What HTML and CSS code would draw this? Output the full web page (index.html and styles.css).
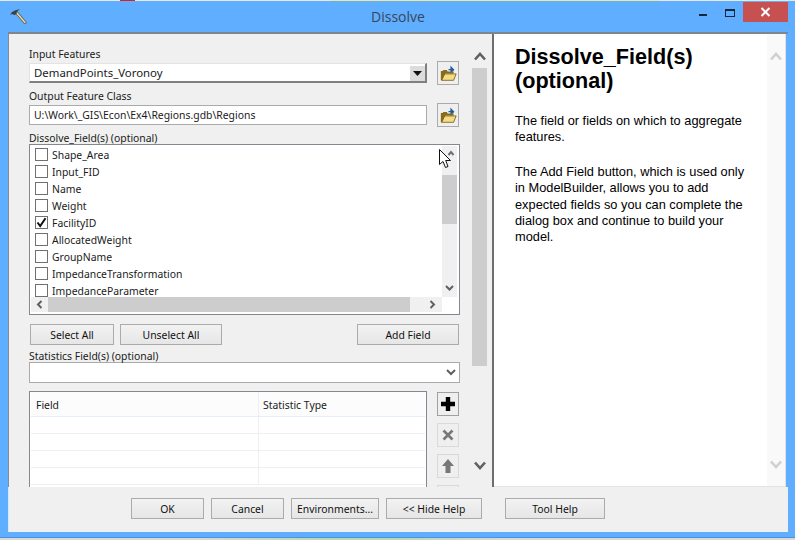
FILE: index.html
```html
<!DOCTYPE html>
<html lang="en">
<head>
<meta charset="utf-8">
<title>Dissolve</title>
<link rel="stylesheet" href="styles.css">
</head>
<body>
<div class="strip strip-top"></div>
<div class="window">
  <header class="titlebar">
    <svg class="hammer" width="18" height="18" viewBox="0 0 18 18"><path d="M7 5 L16 15.5" stroke="#6b6251" stroke-width="3.2" stroke-linecap="round"/><path d="M7 5 L16 15.5" stroke="#e6d9be" stroke-width="1.4" stroke-linecap="round"/><path d="M1 8 L3 5 L6 3.5 L11 2 L8 4.5 L7.5 7 L5.5 8 L3 7 Z" fill="#3c3f46"/></svg>
    <span class="title">Dissolve</span>
    <span class="min"></span>
    <span class="max"></span>
    <span class="close"><svg width="11" height="10" viewBox="0 0 11 10"><path d="M1.5 1 L9.5 9 M9.5 1 L1.5 9" stroke="#fff" stroke-width="2"/></svg></span>
  </header>
  <div class="client">
    <div class="panes">
      <section class="left-pane">
        <div class="form">
          <label class="lbl">Input Features</label>
          <div class="row">
            <div class="combo"><span>DemandPoints_Voronoy</span><span class="drop"><svg width="9" height="5" viewBox="0 0 9 5"><path d="M0 0H9L4.5 5Z" fill="#111"/></svg></span></div>
            <button class="tool"><svg class="folder" width="17" height="17" viewBox="0 0 20 20"><path d="M10 5.5 H15 M13 2.5 L16 5.5 L13 8.5 Z" stroke="#1c5fa8" stroke-width="1.5" fill="#1c5fa8"/><path d="M1 18 V7 H3 L4 6 H8 L9 7.5 H16 V10 H6 L3 18Z" fill="#8a6a1c"/><path d="M2 18 L5.5 10.5 H19 L16 18Z" fill="#f4dc84" stroke="#7a5d18"/></svg></button>
          </div>
          <label class="lbl lbl-next">Output Feature Class</label>
          <div class="row">
            <div class="text-input">U:\Work\_GIS\Econ\Ex4\Regions.gdb\Regions</div>
            <button class="tool"><svg class="folder" width="17" height="17" viewBox="0 0 20 20"><path d="M10 5.5 H15 M13 2.5 L16 5.5 L13 8.5 Z" stroke="#1c5fa8" stroke-width="1.5" fill="#1c5fa8"/><path d="M1 18 V7 H3 L4 6 H8 L9 7.5 H16 V10 H6 L3 18Z" fill="#8a6a1c"/><path d="M2 18 L5.5 10.5 H19 L16 18Z" fill="#f4dc84" stroke="#7a5d18"/></svg></button>
          </div>
          <label class="lbl lbl-list">Dissolve_Field(s) (optional)</label>
          <div class="list">
            <div class="rows">
              <div class="item"><span class="box"></span>Shape_Area</div>
              <div class="item"><span class="box"></span>Input_FID</div>
              <div class="item"><span class="box"></span>Name</div>
              <div class="item"><span class="box"></span>Weight</div>
              <div class="item"><span class="box"><svg width="11" height="11" viewBox="0 0 11 11"><path d="M1.5 5.5 L4.2 9 L9.5 1.2" fill="none" stroke="#111" stroke-width="2"/></svg></span>FacilityID</div>
              <div class="item"><span class="box"></span>AllocatedWeight</div>
              <div class="item"><span class="box"></span>GroupName</div>
              <div class="item"><span class="box"></span>ImpedanceTransformation</div>
              <div class="item"><span class="box"></span>ImpedanceParameter</div>
            </div>
            <div class="vscroll">
              <div class="vthumb"></div>
              <svg class="vdown" width="9" height="6" viewBox="0 0 9 6"><path d="M1 1 L4.5 4.5 L8 1" fill="none" stroke="#606060" stroke-width="2"/></svg>
            </div>
            <div class="hscroll">
              <svg width="7" height="9" viewBox="0 0 7 9"><path d="M5.5 1 L2 4.5 L5.5 8" fill="none" stroke="#606060" stroke-width="2"/></svg>
              <div class="hthumb"></div>
              <svg width="7" height="9" viewBox="0 0 7 9"><path d="M1.5 1 L5 4.5 L1.5 8" fill="none" stroke="#606060" stroke-width="2"/></svg>
            </div>
            <svg class="cursor" width="17" height="21" viewBox="0 0 17 21"><path d="M9.5 6 L12 3 L14.500 6" fill="none" stroke="#707070" stroke-width="2"/><path d="M0.500 0.500 V15.500 L4 12.500 L6.500 18.500 L9 17.500 L6.700 11.500 L11.500 11.500 Z" fill="#fff" stroke="#111"/></svg>
          </div>
          <div class="list-buttons">
            <button class="btn btn-select">Select All</button>
            <button class="btn btn-unselect">Unselect All</button>
            <button class="btn btn-add">Add Field</button>
          </div>
          <label class="lbl lbl-stats">Statistics Field(s) (optional)</label>
          <div class="stat-combo"><svg width="10" height="7" viewBox="0 0 10 7"><path d="M1 1 L5 5 L9 1" fill="none" stroke="#606060" stroke-width="2"/></svg></div>
          <div class="stat-row">
            <div class="table">
              <div class="thead"><span class="c1">Field</span><span class="c2">Statistic Type</span></div>
              <div class="tr"><span class="c1"></span><span class="c2"></span></div>
              <div class="tr"><span class="c1"></span><span class="c2"></span></div>
              <div class="tr"><span class="c1"></span><span class="c2"></span></div>
              <div class="tr"><span class="c1"></span><span class="c2"></span></div>
            </div>
            <div class="tools">
              <button class="tool tool-on"><svg width="16" height="16" viewBox="0 0 16 16"><path d="M8 1V15M1 8H15" stroke="#000" stroke-width="4.400"/></svg></button>
              <button class="tool tool-off"><svg width="12" height="12" viewBox="0 0 12 12"><path d="M1.500 1.500L10.500 10.500M10.500 1.500L1.500 10.500" stroke="#777" stroke-width="2.600"/></svg></button>
              <button class="tool tool-off"><svg width="14" height="16" viewBox="0 0 14 16"><path d="M7 1L13 8H9.500V15H4.500V8H1Z" fill="#777"/></svg></button>
              <button class="tool tool-off"></button>
            </div>
          </div>
        </div>
        <div class="outer-scroll">
          <svg class="chev-up" width="12" height="9" viewBox="0 0 12 9"><path d="M1 7.500L6 2L11 7.500" fill="none" stroke="#606060" stroke-width="2.600"/></svg>
          <div class="outer-thumb"></div>
          <svg class="chev-down" width="12" height="9" viewBox="0 0 12 9"><path d="M1 1.500L6 7L11 1.500" fill="none" stroke="#606060" stroke-width="2.600"/></svg>
        </div>
      </section>
      <div class="divider"></div>
      <section class="help-pane">
        <article class="help">
          <h1>Dissolve_Field(s) (optional)</h1>
          <p>The field or fields on which to aggregate features.</p>
          <p>The Add Field button, which is used only in ModelBuilder, allows you to add expected fields so you can complete the dialog box and continue to build your model.</p>
        </article>
        <div class="help-scroll">
          <svg width="12" height="9" viewBox="0 0 12 9"><path d="M1 7.500L6 2L11 7.500" fill="none" stroke="#d0d0d0" stroke-width="2.600"/></svg>
          <svg width="12" height="9" viewBox="0 0 12 9"><path d="M1 1.500L6 7L11 1.500" fill="none" stroke="#d0d0d0" stroke-width="2.600"/></svg>
        </div>
      </section>
    </div>
    <footer class="footer">
      <button class="btn btn-ok">OK</button>
      <button class="btn btn-ok">Cancel</button>
      <button class="btn btn-env">Environments...</button>
      <button class="btn btn-hide">&lt;&lt; Hide Help</button>
      <button class="btn btn-toolhelp">Tool Help</button>
    </footer>
  </div>
</div>
<div class="strip strip-bottom"></div>
</body>
</html>
```

FILE: styles.css
```css
* { box-sizing: border-box; }
html, body { margin: 0; padding: 0; }
body {
  width: 795px;
  height: 540px;
  overflow: hidden;
  background: #fff;
  font-family: "Noto Sans", "Liberation Sans", sans-serif;
  font-size: 10.4px;
  color: #1a1a1a;
}
button { font: inherit; color: inherit; padding: 0; cursor: default; }
.strip { height: 1px; }
.strip-top {
  background: linear-gradient(90deg, #e8e8e8 0 120px, #e0201c 120px 135px, #e8e8e8 135px 330px, #efe89a 330px 660px, #e8e8e8 660px);
}
.strip-bottom {
  height: 2px;
  background: linear-gradient(90deg, #d8d8d8 0 200px, #bcd7b8 320px 400px, #d8d8d8 500px);
}
.window {
  height: 537px;
  background: #60aeff;
  border-bottom: 1px solid #4b93e0;
  display: flex;
  flex-direction: column;
  padding: 0 7px 5px 8px;
}
.titlebar {
  position: relative;
  height: 31px;
  flex: none;
  display: flex;
  justify-content: center;
  align-items: center;
}
.title {
  font-family: "Open Sans", "Noto Sans", sans-serif;
  font-size: 14px;
  color: #37475a;
}
.hammer { position: absolute; left: 1px; top: 6px; }
.min { position: absolute; left: 691px; top: 13px; width: 8px; height: 2px; background: #16263c; }
.max { position: absolute; left: 717px; top: 8px; width: 10px; height: 8px; border: 1px solid #16263c; border-top-width: 2px; }
.close {
  position: absolute; left: 735px; top: 1px; width: 45px; height: 20px;
  background: #c75050; display: flex; align-items: center; justify-content: center;
}
.client { flex: 1; display: flex; flex-direction: column; min-height: 0; }
.panes {
  height: 455px;
  flex: none;
  display: flex;
  overflow: hidden;
  border-top: 2px solid #7f858c;
}
.left-pane {
  width: 482px;
  flex: none;
  background: #f0f0f0;
  border-left: 1px solid #8a8a8a;
  display: flex;
}
.form { width: 463px; flex: none; padding: 13px 0 0 20px; overflow: hidden; }
.lbl { display: block; height: 14px; line-height: 14px; white-space: nowrap; }
.lbl-next { margin-top: 4px; }
.lbl-list { margin-top: 4px; height: 13px; }
.lbl-stats { margin-top: 4px; height: 13px; line-height: 14px; }
.row { display: flex; align-items: center; justify-content: space-between; width: 430px; height: 24px; }
.combo {
  width: 398px; height: 20px; background: #fff;
  border: 1px solid #a6a6a6; border-right-width: 2px; border-bottom-width: 2px;
  border-color: #e3e3e3 #808080 #808080 #e3e3e3;
  padding-left: 4px; line-height: 18px; font-size: 11.4px;
  display: flex; justify-content: space-between;
}
.drop { width: 15px; height: 15px; background: #dcdcdc; display: flex; align-items: center; justify-content: center; margin-top: 2px; }
.text-input {
  width: 398px; height: 20px; background: #fff; border: 1px solid #ababab;
  padding-left: 4px; line-height: 18px; white-space: nowrap;
}
.tool {
  width: 22px; height: 24px; flex: none; background: #efefef; border: 1px solid #ababab;
  display: flex; align-items: center; justify-content: center;
}
.tool-off { border-color: #d9d9d9; }
.tool-on { border-color: #a0a0a0; }
.list {
  position: relative;
  width: 431px; height: 171px;
  background: #fff; border: 1px solid #828790;
  padding: 1px 2px 2px 1px;
  display: grid;
  grid-template-columns: 1fr 15px;
  grid-template-rows: 151px 15px;
}
.rows { overflow: hidden; padding: 0 0 0 4px; }
.item { height: 17px; line-height: 19px; display: flex; align-items: flex-start; gap: 4px; white-space: nowrap; }
.box {
  width: 13px; height: 13px; flex: none; background: #fff; border: 1px solid #707070;
  margin-top: 2px;
  display: flex; align-items: center; justify-content: center;
}
.vscroll {
  background: #f0f0f0; padding-top: 29px;
  display: flex; flex-direction: column; align-items: center; justify-content: space-between; padding-bottom: 6px;
}
.vthumb { width: 15px; height: 49px; background: #cdcdcd; }
.hscroll {
  grid-column: 1;
  background: #f0f0f0; display: flex; align-items: center;
}
.hscroll svg { margin: 0 5px; flex: none; }
.hthumb { width: 362px; height: 15px; background: #cdcdcd; margin-right: 14px; }
.cursor { position: absolute; left: 409px; top: 4px; }
.list-buttons { width: 430px; display: flex; margin-top: 9px; padding-left: 1px; }
.btn {
  height: 21px; flex: none; border: 1px solid #ababab;
  background: linear-gradient(#f2f2f2, #e6e6e6);
  color: #111;
  white-space: nowrap;
}
.btn-select { width: 84px; }
.btn-unselect { width: 102px; margin-left: 6px; }
.btn-add { width: 102px; margin-left: auto; }
.stat-combo {
  width: 431px; height: 21px; background: #fff; border: 1px solid #ababab;
  display: flex; align-items: center; justify-content: flex-end; padding-right: 3px;
}
.stat-row { width: 430px; display: flex; justify-content: space-between; margin-top: 8px; }
.table { width: 398px; height: 110px; background: #fff; border: 1px solid #828790; border-bottom: 0; padding: 0 1px 0 1px; flex: none; }
.thead { height: 25px; background: #fcfcfc; border-bottom: 1px solid #e6eefa; display: flex; line-height: 26px; }
.tr { height: 17px; border-bottom: 1px solid #efefef; display: flex; }
.c1 { width: 228px; flex: none; padding-left: 5px; border-right: 1px solid #efeff2; }
.c2 { flex: 1; padding-left: 4px; }
.tools { margin-top: 1px; display: flex; flex-direction: column; gap: 7px; }
.outer-scroll {
  width: 15px; flex: none; position: relative;
  display: flex; flex-direction: column; align-items: center;
  padding-top: 18px;
}
.chev-up { display: block; }
.outer-thumb { width: 15px; height: 298px; background: #cdcdcd; margin-top: 7px; }
.chev-down { margin-top: 95px; }
.divider {
  width: 4px; flex: none; background: #f0f0f0;
  border-right: 2px solid #6e6e6e;
}
.help-pane {
  width: 292px; flex: none; background: #fff; display: flex;
  border-right: 1px solid #e0e0e0; border-bottom: 1px solid #e3e3e3;
}
.help {
  flex: 1; padding: 11px 0 0 21px;
  font-family: "Liberation Sans", Arial, sans-serif;
  color: #000;
  font-size: 12.8px;
  line-height: 16.3px;
}
.help h1 { margin: 0 0 20px; font-size: 21.6px; line-height: 24px; font-weight: 700; width: 200px; }
.help p { margin: 0 0 18.4px; width: 240px; }
.help-scroll {
  width: 18px; flex: none; background: #f9f9f9;
  display: flex; flex-direction: column; align-items: center; justify-content: space-between;
  padding: 18px 0 17px;
}
.footer {
  flex: 1; background: #f0f0f0; padding: 11px 0 0 122px; display: flex; align-items: flex-start; gap: 7px;
  border-left: 1px solid #d6e8fb;
}
.btn-ok { width: 73px; }
.btn-env { width: 88px; }
.btn-hide { width: 96px; }
.btn-toolhelp { width: 100px; margin-left: 16px; }
```
